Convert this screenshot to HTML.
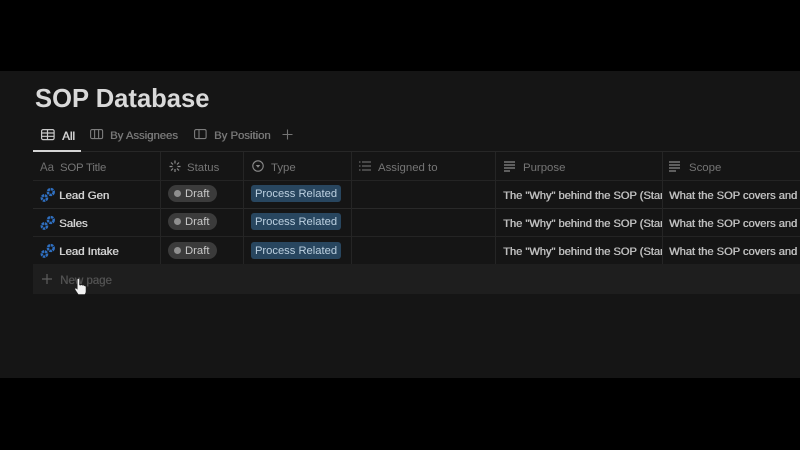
<!DOCTYPE html>
<html><head><meta charset="utf-8">
<style>
*{margin:0;padding:0;box-sizing:border-box}
html,body{width:800px;height:450px;background:#000;overflow:hidden}
body{position:relative;font-family:"Liberation Sans",sans-serif}
#p{position:absolute;left:0;top:71px;width:800px;height:307px;background:#151515;overflow:hidden;filter:blur(.35px)}
.a{position:absolute;white-space:nowrap;line-height:1}
.l{position:absolute;background:#2a2a2a}
.h{font-size:11.4px;color:#757575;top:92px}
.c{font-size:11.1px;color:#bdbdbd;text-shadow:.45px 0 0 #bdbdbd}
.t{font-size:11.4px;color:#d0d0d0;text-shadow:.5px 0 0 #d0d0d0}
.v{font-size:11.3px;color:#777;text-shadow:.4px 0 0 #777}
.s{position:absolute;left:168px;width:49px;height:17px;border-radius:9px;background:#3b3b3b}
.s i{position:absolute;left:6px;top:5px;width:7px;height:7px;border-radius:50%;background:#8f8f8f}
.s b{position:absolute;left:17px;top:3px;font-size:11.3px;line-height:13px;color:#c8c8c8;font-weight:normal}
.y{position:absolute;left:251px;width:90px;height:17px;border-radius:3px;background:#28465f;color:#bcd0e0;font-size:11.2px;line-height:18px;text-align:center;white-space:nowrap}
svg{position:absolute;overflow:visible}
</style></head><body>
<div id="p">
<div class="a" style="left:35px;top:16px;font-size:25.6px;font-weight:bold;color:#d9d9d9">SOP Database</div>

<svg style="left:41px;top:58px" width="14" height="12" fill="none" stroke="#c8c8c8" stroke-width="1.2"><rect x=".6" y=".6" width="12.5" height="10" rx="1.5"/><path d="M.6 4h12.5M.6 7.3h12.5M6.5 .6v10"/></svg>
<div class="a" style="left:62px;top:60px;font-size:11.6px;color:#d0d0d0;text-shadow:.5px 0 0 #d0d0d0">All</div>
<svg style="left:90px;top:58px" width="14" height="11" fill="none" stroke="#7c7c7c" stroke-width="1.1"><rect x=".6" y=".6" width="12" height="9" rx="1.5"/><path d="M4.6 .6v9M8.6 .6v9"/></svg>
<div class="a v" style="left:110px;top:60px">By Assignees</div>
<svg style="left:194px;top:58px" width="13" height="11" fill="none" stroke="#7c7c7c" stroke-width="1.1"><rect x=".6" y=".6" width="11.5" height="9" rx="1.5"/><path d="M5 .6v9"/></svg>
<div class="a v" style="left:214px;top:60px">By Position</div>
<svg style="left:282px;top:58px" width="11" height="11" stroke="#747474" stroke-width="1.1"><path d="M5.5 .5v10M.5 5.5h10"/></svg>

<div class="l" style="left:33px;top:80px;width:767px;height:1px;background:#272727"></div>
<div class="l" style="left:33px;top:79px;width:48px;height:2px;background:#d4d4d4"></div>

<div class="a h" style="left:40px;color:#6d6d6d;font-size:11.5px">Aa</div>
<div class="a h" style="left:60px;letter-spacing:-.2px">SOP Title</div>
<svg style="left:169px;top:89px" width="12" height="13" stroke="#8a8a8a" stroke-width="1.2"><path d="M6 .5v3M6 9v3M.5 6.5h3M8.5 6.5h3M2 2.5l2 2M8 8.5l2 2M10 2.5l-2 2M4 8.5l-2 2"/></svg>
<div class="a h" style="left:187px">Status</div>
<svg style="left:252px;top:89px" width="12" height="12" fill="none" stroke="#8a8a8a" stroke-width="1.1"><circle cx="6" cy="6" r="5.2"/><path d="M3.8 5h4.4L6 7.8z" fill="#8a8a8a" stroke="none"/></svg>
<div class="a h" style="left:271px">Type</div>
<svg style="left:359px;top:90px" width="12" height="10" stroke="#7c7c7c" stroke-width="1.1"><path d="M3 1h9M3 5h9M3 9h9M0 1h1.5M0 5h1.5M0 9h1.5"/></svg>
<div class="a h" style="left:378px">Assigned to</div>
<svg style="left:504px;top:90px" width="12" height="11" stroke="#8a8a8a" stroke-width="1.3"><path d="M0 1h11M0 4h11M0 7h11M0 10h6"/></svg>
<div class="a h" style="left:523px">Purpose</div>
<svg style="left:669px;top:90px" width="12" height="11" stroke="#8a8a8a" stroke-width="1.3"><path d="M0 1h11M0 4h11M0 7h11M0 10h7"/></svg>
<div class="a h" style="left:689px">Scope</div>

<div class="l" style="left:33px;top:109px;width:767px;height:1px;background:#242424"></div>
<div class="l" style="left:33px;top:137px;width:767px;height:1px;background:#292929"></div>
<div class="l" style="left:33px;top:165px;width:767px;height:1px;background:#242424"></div>

<div class="l" style="left:160px;top:81px;width:1px;height:112px;background:#252525"></div>
<div class="l" style="left:243px;top:81px;width:1px;height:112px;background:#252525"></div>
<div class="l" style="left:351px;top:81px;width:1px;height:112px;background:#252525"></div>
<div class="l" style="left:495px;top:81px;width:1px;height:112px;background:#252525"></div>
<div class="l" style="left:662px;top:81px;width:1px;height:112px;background:#252525"></div>

<svg style="left:40px;top:117px" width="16" height="14" fill="none" stroke="#2f6fc0" stroke-width="2.5"><circle cx="10.8" cy="4" r="2.9" stroke-dasharray="2.6 .7"/><circle cx="4.4" cy="10" r="2.6" stroke-dasharray="2.4 .7"/></svg>
<svg style="left:40px;top:145px" width="16" height="14" fill="none" stroke="#2f6fc0" stroke-width="2.5"><circle cx="10.8" cy="4" r="2.9" stroke-dasharray="2.6 .7"/><circle cx="4.4" cy="10" r="2.6" stroke-dasharray="2.4 .7"/></svg>
<svg style="left:40px;top:173px" width="16" height="14" fill="none" stroke="#2f6fc0" stroke-width="2.5"><circle cx="10.8" cy="4" r="2.9" stroke-dasharray="2.6 .7"/><circle cx="4.4" cy="10" r="2.6" stroke-dasharray="2.4 .7"/></svg>

<div class="a t" style="left:59px;top:120px">Lead Gen</div>
<div class="a t" style="left:59px;top:148px">Sales</div>
<div class="a t" style="left:59px;top:176px">Lead Intake</div>

<div class="s" style="top:114px"><i></i><b>Draft</b></div>
<div class="s" style="top:142px"><i></i><b>Draft</b></div>
<div class="s" style="top:171px"><i></i><b>Draft</b></div>

<div class="y" style="top:114px">Process Related</div>
<div class="y" style="top:142px">Process Related</div>
<div class="y" style="top:171px">Process Related</div>

<div class="a c" style="left:503px;top:120px;width:159px;overflow:hidden">The "Why" behind the SOP (Start</div>
<div class="a c" style="left:503px;top:148px;width:159px;overflow:hidden">The "Why" behind the SOP (Start</div>
<div class="a c" style="left:503px;top:176px;width:159px;overflow:hidden">The "Why" behind the SOP (Start</div>
<div class="a c" style="left:669px;top:120px">What the SOP covers and</div>
<div class="a c" style="left:669px;top:148px">What the SOP covers and</div>
<div class="a c" style="left:669px;top:176px">What the SOP covers and</div>

<div class="l" style="left:33px;top:193px;width:767px;height:30px;background:#1e1e1e"></div>
<svg style="left:42px;top:203px" width="10" height="10" stroke="#5e5e5e" stroke-width="1.2"><path d="M5 0v10M0 5h10"/></svg>
<div class="a" style="left:60px;top:205px;font-size:11.5px;color:#505050;text-shadow:.4px 0 0 #505050">New page</div>

<svg style="left:74px;top:207px" width="13" height="19"><path d="M3.3 1.5c0-1.3 2.2-1.3 2.2 0v5.5l1.2.1c.8-.5 1.6-.3 1.9.3.8-.4 1.6-.1 1.8.5.8-.2 1.6.2 1.6 1.2v4.2c0 1.6-.7 2.3-1.2 3.2H4.3c-.6-1.1-1.5-2.2-3-4.6-.8-1.2 0-2.2 1.2-1.4l.8.8z" fill="#f2f2f2" stroke="#222" stroke-width=".5"/></svg>
</div>
</body></html>
